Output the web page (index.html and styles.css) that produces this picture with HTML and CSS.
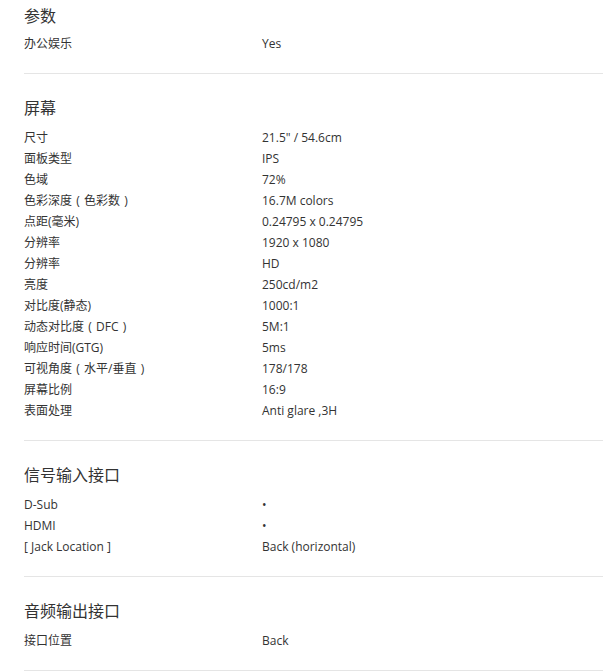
FILE: index.html
```html
<!DOCTYPE html>
<html lang="zh-CN">
<head>
<meta charset="utf-8">
<title>参数</title>
<link rel="stylesheet" href="styles.css">
</head>
<body>
<div class="specs">
  <section class="group first">
    <h2 class="group-title">参数</h2>
    <div class="row"><span class="k">办公娱乐</span><span class="v">Yes</span></div>
  </section>
  <section class="group">
    <h2 class="group-title">屏幕</h2>
    <div class="row"><span class="k">尺寸</span><span class="v">21.5" / 54.6cm</span></div>
    <div class="row"><span class="k">面板类型</span><span class="v">IPS</span></div>
    <div class="row"><span class="k">色域</span><span class="v">72%</span></div>
    <div class="row"><span class="k">色彩深度<span class="fw">(</span>色彩数<span class="fw">)</span></span><span class="v">16.7M colors</span></div>
    <div class="row"><span class="k">点距(毫米)</span><span class="v">0.24795 x 0.24795</span></div>
    <div class="row"><span class="k">分辨率</span><span class="v">1920 x 1080</span></div>
    <div class="row"><span class="k">分辨率</span><span class="v">HD</span></div>
    <div class="row"><span class="k">亮度</span><span class="v">250cd/m2</span></div>
    <div class="row"><span class="k">对比度(静态)</span><span class="v">1000:1</span></div>
    <div class="row"><span class="k">动态对比度<span class="fw">(</span>DFC<span class="fw">)</span></span><span class="v">5M:1</span></div>
    <div class="row"><span class="k">响应时间(GTG)</span><span class="v">5ms</span></div>
    <div class="row"><span class="k">可视角度<span class="fw">(</span>水平/垂直<span class="fw">)</span></span><span class="v">178/178</span></div>
    <div class="row"><span class="k">屏幕比例</span><span class="v">16:9</span></div>
    <div class="row"><span class="k">表面处理</span><span class="v">Anti glare ,3H</span></div>
  </section>
  <section class="group">
    <h2 class="group-title">信号输入接口</h2>
    <div class="row"><span class="k">D-Sub</span><span class="v">•</span></div>
    <div class="row"><span class="k">HDMI</span><span class="v">•</span></div>
    <div class="row"><span class="k">[ Jack Location ]</span><span class="v">Back (horizontal)</span></div>
  </section>
  <section class="group">
    <h2 class="group-title">音频输出接口</h2>
    <div class="row"><span class="k">接口位置</span><span class="v">Back</span></div>
  </section>
</div>
</body>
</html>
```
FILE: styles.css
```css
html, body {
  margin: 0;
  padding: 0;
  background: #fff;
}
body {
  font-family: "Open Sans", "Noto Sans CJK SC", sans-serif;
  color: #333;
}
.specs {
  padding-left: 24px;
}
.group {
  padding: 22px 0 19px;
  border-bottom: 1px solid #e5e5e5;
}
.group.first {
  padding-top: 4px;
}
.group-title {
  margin: 0 0 7px;
  font-size: 16px;
  line-height: 24px;
  font-weight: normal;
  color: #333;
}
.first .group-title {
  margin-bottom: 5px;
}
.row {
  display: grid;
  grid-template-columns: 238px 1fr;
  font-size: 12px;
  line-height: 21px;
}
.k, .v {
  white-space: nowrap;
}
.fw {
  display: inline-block;
  width: 12px;
  text-align: center;
}
```
